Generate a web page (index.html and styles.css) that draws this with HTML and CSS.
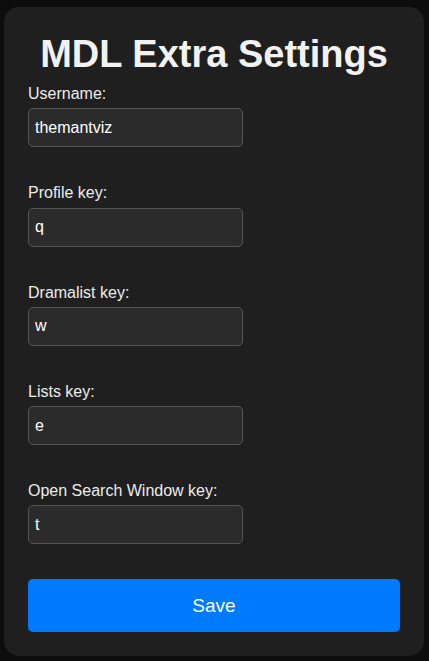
FILE: index.html
```html
<!DOCTYPE html>
<html>
<head>
<meta charset="utf-8">
<link rel="stylesheet" href="styles.css">
</head>
<body>
<div class="panel">
  <h1 class="title">MDL Extra Settings</h1>
  <form class="form">
    <div class="field">
      <label class="label" for="username">Username:</label>
      <input class="input" id="username" type="text" value="themantviz">
    </div>
    <div class="field">
      <label class="label" for="profile">Profile key:</label>
      <input class="input" id="profile" type="text" value="q">
    </div>
    <div class="field">
      <label class="label" for="dramalist">Dramalist key:</label>
      <input class="input" id="dramalist" type="text" value="w">
    </div>
    <div class="field">
      <label class="label" for="lists">Lists key:</label>
      <input class="input" id="lists" type="text" value="e">
    </div>
    <div class="field">
      <label class="label" for="search">Open Search Window key:</label>
      <input class="input" id="search" type="text" value="t">
    </div>
    <button class="save" type="button">Save</button>
  </form>
</div>
</body>
</html>
```
FILE: styles.css
```css
* { box-sizing: border-box; }
html, body {
  margin: 0;
  padding: 0;
  background: #0d0d0d;
  font-family: Arial, "Liberation Sans", sans-serif;
  height: 661px;
  overflow: hidden;
}
.panel {
  margin: 7px 5px 0 4px;
  width: 420px;
  height: 649px;
  background: #1f1f1f;
  border-radius: 15px;
  padding: 25px 24px 24px;
}
.title {
  margin: 0;
  font-size: 38px;
  line-height: 44px;
  font-weight: bold;
  text-align: center;
  color: #f2f2f2;
}
.form {
  display: flex;
  flex-direction: column;
  margin-top: 9px;
}
.field {
  display: flex;
  flex-direction: column;
  gap: 5px;
  margin-bottom: 36.85px;
}
.field:nth-last-of-type(1) { margin-bottom: 35px; }
.label {
  font-size: 16px;
  line-height: 18.4px;
  color: #ececec;
}
.input {
  width: 215px;
  height: 39px;
  margin: 0;
  padding: 0 6px;
  background: #2b2b2b;
  border: 1px solid #555;
  border-radius: 5px;
  color: #fff;
  font-family: Arial, "Liberation Sans", sans-serif;
  font-size: 16px;
  outline: none;
}
.save {
  height: 53px;
  width: 100%;
  border: none;
  border-radius: 5px;
  background: #007bff;
  color: #fff;
  font-family: Arial, "Liberation Sans", sans-serif;
  font-size: 19px;
  cursor: pointer;
}
```
